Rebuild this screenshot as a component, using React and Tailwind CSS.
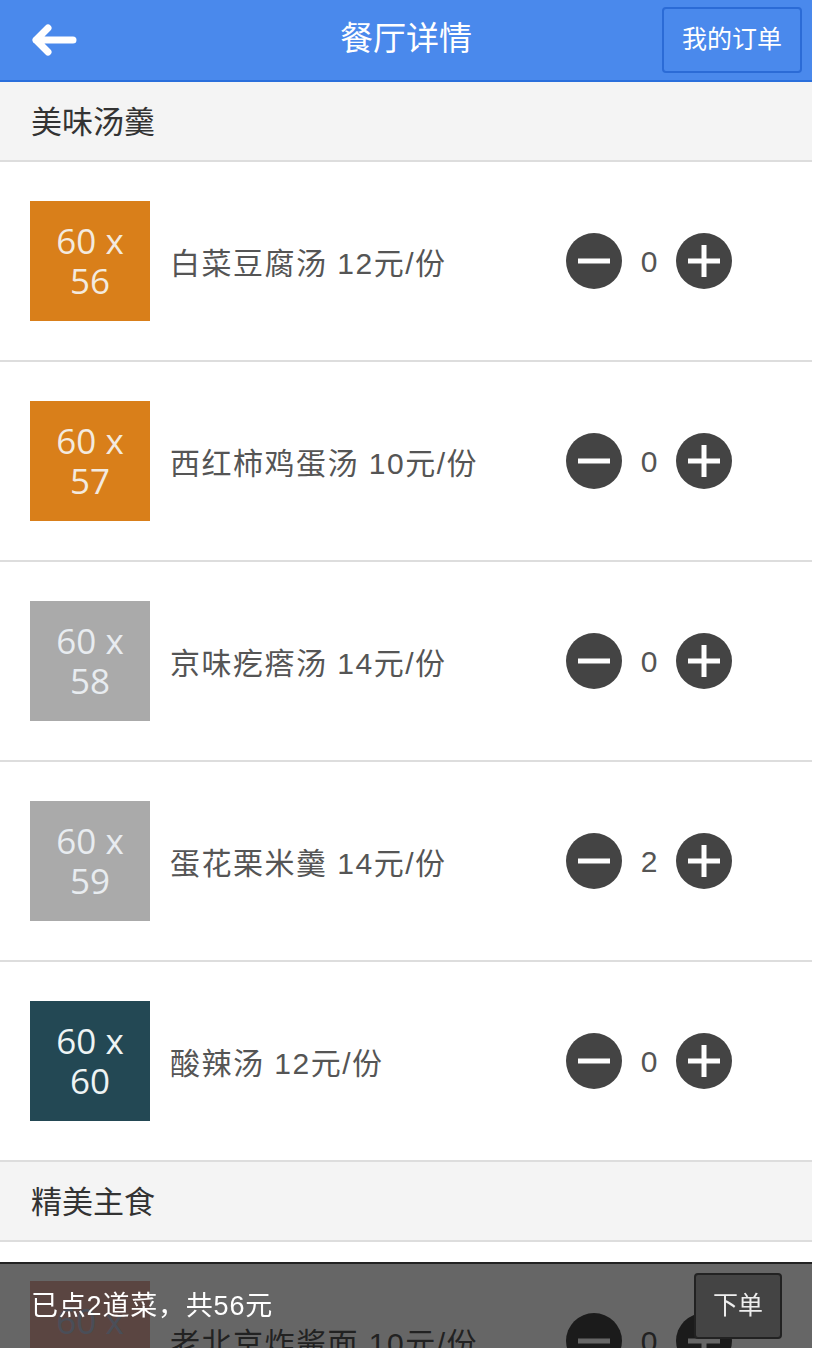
import React from "react";

const FONT = { fontFamily: '"Liberation Sans", "Noto Sans CJK SC", sans-serif' };

const sections = [
  {
    title: "美味汤羹",
    items: [
      { name: "白菜豆腐汤 12元/份", img: "56", bg: "bg-[#d97f1a]", fg: "text-[#f3eadf]", count: 0 },
      { name: "西红柿鸡蛋汤 10元/份", img: "57", bg: "bg-[#d97f1a]", fg: "text-[#f3eadf]", count: 0 },
      { name: "京味疙瘩汤 14元/份", img: "58", bg: "bg-[#aaaaaa]", fg: "text-[#e8ecf0]", count: 0 },
      { name: "蛋花栗米羹 14元/份", img: "59", bg: "bg-[#aaaaaa]", fg: "text-[#e8ecf0]", count: 2 },
      { name: "酸辣汤 12元/份", img: "60", bg: "bg-[#234854]", fg: "text-[#eef4f4]", count: 0 },
    ],
  },
  {
    title: "精美主食",
    items: [
      { name: "老北京炸酱面 10元/份", img: "61", bg: "bg-[#e2aca2]", fg: "text-[#b8c4dc]", count: 0 },
    ],
  },
];

function Circle({ type }) {
  return (
    <div className="w-[56px] h-[56px] rounded-full bg-[#444444] flex items-center justify-center shrink-0">
      <svg width="34" height="34" viewBox="0 0 34 34">
        <rect x="1" y="14.5" width="32" height="5" fill="#fff" />
        {type === "plus" && <rect x="14.5" y="1" width="5" height="32" fill="#fff" />}
      </svg>
    </div>
  );
}

function Row({ item }) {
  return (
    <div className="h-[200px] border-b-2 border-[#dddddd] bg-white flex items-center pl-[30px]">
      <div
        className={`w-[120px] h-[120px] ${item.bg} ${item.fg} flex flex-col items-center justify-center text-[35px] leading-[40px] shrink-0`}
        style={{ fontFamily: '"Open Sans", "Liberation Sans", sans-serif' }}
      >
        <span>60 x</span>
        <span>{item.img}</span>
      </div>
      <div className="ml-[20px] pt-[4px] text-[30px] tracking-[1.5px] text-[#555555] flex-1 whitespace-nowrap">{item.name}</div>
      <div className="flex items-center mr-[80px]">
        <Circle type="minus" />
        <div className="w-[54px] text-center text-[30px] text-[#555555]">{item.count}</div>
        <Circle type="plus" />
      </div>
    </div>
  );
}

export default function App() {
  return (
    <div className="w-[812px] min-h-[1348px] bg-white relative overflow-hidden" style={FONT}>
      <div className="h-[82px] bg-[#4a89ec] border-b-2 border-[#2a6fdc] flex items-center relative">
        <div className="pl-[30px] flex items-center">
          <svg width="48" height="38" viewBox="0 0 48 38">
            <path d="M6 19 H43 M6 19 L18 7 M6 19 L18 31" stroke="#fff" strokeWidth="7" strokeLinecap="round" strokeLinejoin="round" fill="none" />
          </svg>
        </div>
        <div className="absolute left-0 right-0 top-0 h-[78px] flex items-center justify-center pointer-events-none">
          <span className="text-[33px] text-white">餐厅详情</span>
        </div>
        <div className="ml-auto mr-[10px] w-[140px] h-[66px] border-2 border-[#2b6bd6] rounded-[4px] flex items-center justify-center text-[25px] text-white">
          我的订单
        </div>
      </div>
      {sections.map((s) => (
        <div key={s.title}>
          <div className="h-[80px] bg-[#f4f4f4] border-b-2 border-[#dddddd] flex items-center pl-[31px] pt-[4px] text-[31px] text-[#333333]">
            {s.title}
          </div>
          {s.items.map((it) => (
            <Row key={it.name} item={it} />
          ))}
        </div>
      ))}
      <div className="fixed bottom-0 left-0 w-[812px] h-[86px] bg-[rgba(0,0,0,0.6)] border-t-2 border-[#222222] flex items-center pl-[31px]">
        <span className="text-[27px] tracking-[0.8px] text-white">已点2道菜，共56元</span>
        <div className="ml-auto mr-[30px] w-[88px] h-[66px] bg-[#444444] border-2 border-[#222222] rounded-[4px] flex items-center justify-center text-[25px] text-[#eeeeee]">
          下单
        </div>
      </div>
    </div>
  );
}
